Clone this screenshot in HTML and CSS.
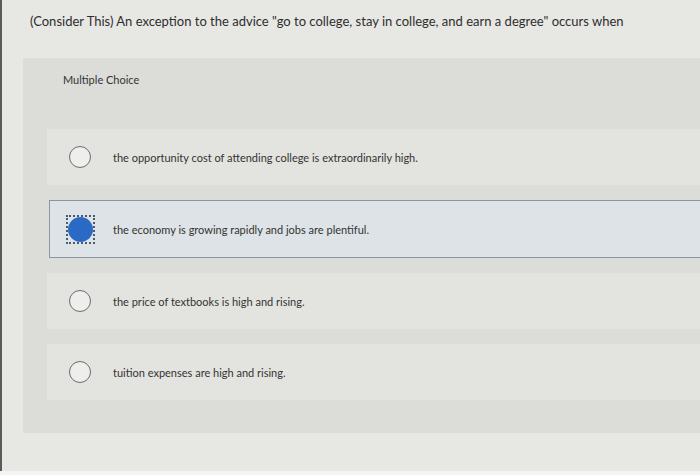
FILE: index.html
```html
<!DOCTYPE html>
<html>
<head>
<meta charset="utf-8">
<link rel="stylesheet" href="styles.css">
</head>
<body>
<div class="screen">
  <p class="question">(Consider This) An exception to the advice "go to college, stay in college, and earn a degree" occurs when</p>
  <div class="panel">
    <div class="label">Multiple Choice</div>
    <div class="options">
      <div class="option"><span class="radio"></span><span class="text">the opportunity cost of attending college is extraordinarily high.</span></div>
      <div class="option selected"><span class="focus"><span class="radio checked"></span></span><span class="text">the economy is growing rapidly and jobs are plentiful.</span></div>
      <div class="option"><span class="radio"></span><span class="text">the price of textbooks is high and rising.</span></div>
      <div class="option"><span class="radio"></span><span class="text">tuition expenses are high and rising.</span></div>
    </div>
  </div>
</div>
</body>
</html>
```
FILE: styles.css
```css
html, body {
  margin: 0;
  padding: 0;
  background: #f4f4f2;
}
.screen {
  width: 698px;
  height: 471px;
  border-left: 2px solid #5a5a5a;
  background: #e7e7e4;
  font-family: "Lato", "Liberation Sans", sans-serif;
  color: #333;
  overflow: hidden;
  display: flex;
  flex-direction: column;
}
.question {
  margin: 12px 0 0 28px;
  font-size: 13px;
  line-height: 18px;
  color: #2e2e2e;
}
.panel {
  margin: 28px 0 0 21px;
  height: 375px;
  background: #dcdcd9;
  display: flex;
  flex-direction: column;
}
.label {
  padding: 15px 0 0 40px;
  font-size: 11px;
  color: #333;
}
.options {
  margin: 43px 0 0 24px;
  display: flex;
  flex-direction: column;
  gap: 15px;
}
.option {
  height: 56px;
  background: #e3e3e0;
  display: flex;
  align-items: center;
  padding-left: 22px;
}
.option.selected {
  height: 56px;
  background: #dde3e6;
  border: 1px solid #8c96a2;
  border-right: none;
  margin-left: 2px;
  padding-left: 16px;
}
.radio {
  width: 22px;
  height: 22px;
  border: 1.5px solid #6c6c6c;
  border-radius: 50%;
  box-sizing: border-box;
  background: #eeeeec;
  flex: none;
}
.focus {
  width: 29px;
  height: 29px;
  box-sizing: border-box;
  border: 2px dotted #4a5a74;
  display: flex;
  align-items: center;
  justify-content: center;
  flex: none;
}
.radio.checked {
  width: 25px;
  height: 25px;
  border: none;
  background: #2a6ac4;
}
.text {
  margin-left: 22px;
  font-size: 11px;
  color: #333;
}
.option.selected .text {
  margin-left: 18px;
}
```
